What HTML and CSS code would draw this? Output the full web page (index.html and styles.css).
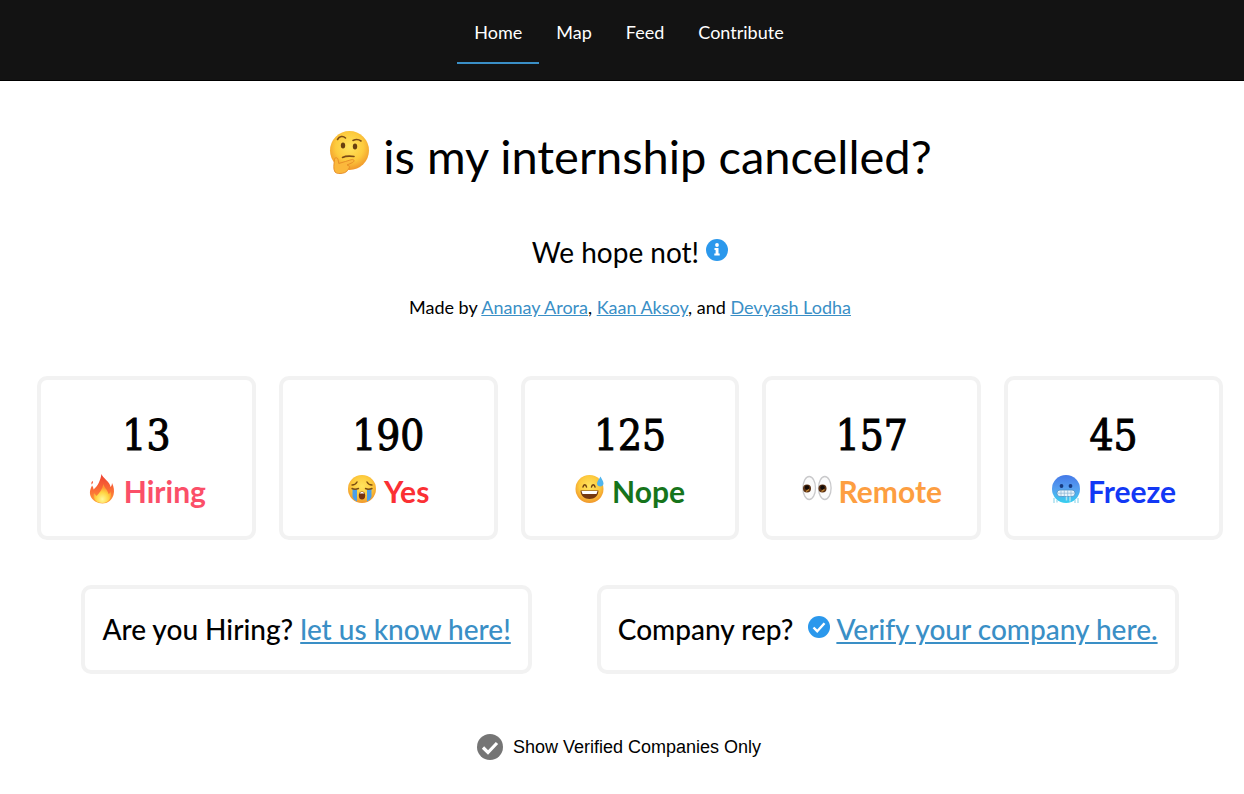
FILE: index.html
```html
<!DOCTYPE html>
<html lang="en">
<head>
<meta charset="utf-8">
<meta name="viewport" content="width=device-width, initial-scale=1">
<title>is my internship cancelled?</title>
<link rel="stylesheet" href="styles.css">
</head>
<body>
<svg class="defs" aria-hidden="true">
  <defs>
    <radialGradient id="face" cx="50%" cy="40%" r="60%"><stop offset="0" stop-color="#ffe45f"/><stop offset=".6" stop-color="#fdcb3d"/><stop offset="1" stop-color="#f0962b"/></radialGradient>
    <linearGradient id="ice" x1="0" y1="0" x2="0" y2="1"><stop offset="0" stop-color="#4479e8"/><stop offset=".5" stop-color="#56a0f0"/><stop offset="1" stop-color="#36d0ef"/></linearGradient>
    <linearGradient id="flame" x1="0" y1="0" x2="0" y2="1"><stop offset="0" stop-color="#ee3f32"/><stop offset=".6" stop-color="#fb7236"/><stop offset="1" stop-color="#fda23a"/></linearGradient>
    <radialGradient id="core" cx="50%" cy="80%" r="60%"><stop offset="0" stop-color="#fff79a"/><stop offset=".6" stop-color="#ffd543"/><stop offset="1" stop-color="#ff9a35"/></radialGradient>
  </defs>
</svg>
<header class="header">
  <nav class="nav">
    <a class="tab active" href="#">Home</a>
    <a class="tab" href="#map">Map</a>
    <a class="tab" href="#feed">Feed</a>
    <a class="tab" href="#contribute">Contribute</a>
  </nav>
</header>
<main class="main">
  <h1 class="title">
    <svg class="emoji-large" viewBox="0 0 42 44" aria-hidden="true">
      <circle cx="21.500" cy="20.500" r="19.500" fill="url(#face)"/>
      <path d="M9.500 9.500c2-3.500 5.500-4 8-1.500M25 10.500c3-1.500 6-1 8 .5M14.500 27.500c4-2 8-1.500 11.500-1" fill="none" stroke="#7b4b16" stroke-width="1.600" stroke-linecap="round"/>
      <ellipse cx="15" cy="15.500" rx="2.200" ry="3" fill="#69400f"/><ellipse cx="27" cy="16.500" rx="2.200" ry="3" fill="#69400f"/>
      <path d="M7 42c-2-3-1-8-.5-12.500 0-2 3-2.500 3.500 0l.8 4c4-1 9-3 13-4 2.500-.5 3 2 .8 3L19 35c3.500.5 2.500 3.500 1 4.500-1 3-5 4-8 4-2 0-3.500 0-5-1.500z" fill="#fbb83c" stroke="#e48a26" stroke-width=".9"/>
    </svg>
    <span>is my internship cancelled?</span>
  </h1>
  <p class="hope">We hope not!
    <svg class="info" viewBox="0 0 22 22" role="img" aria-label="Information"><circle cx="11" cy="11" r="11" fill="#2b98ec"/><circle cx="11" cy="6" r="1.900" fill="#fff"/><path d="M8.500 9h4v5.500h1.200v2H8.300v-2h1.300V11H8.500z" fill="#fff"/></svg>
  </p>
  <p class="credits">Made by <a href="#ananay">Ananay Arora</a>, <a href="#kaan">Kaan Aksoy</a>, and <a href="#devyash">Devyash Lodha</a></p>

  <section class="stats">
    <div class="card stat">
      <span class="count">13</span>
      <span class="status hiring">
        <svg class="emoji" viewBox="0 0 30 30" aria-hidden="true"><path d="M14.500 0c1 4 9 8 9 13 1-1 1.500-2.500 1.500-4 2 4 2.500 8 1.500 12-1.500 5-6 8.500-11 8.500S5 26.500 3.500 22C2 17.500 4 14 5 11.500c1 1.500 1.500 2.500 1.500 4C11 12 13.500 6 14.500 0zM5.500 7c1 1 .5 2-.8 3.500C4 9 4.500 8 5.500 7z" fill="url(#flame)"/><path d="M16.500 10c0 3 4.500 6 5 10 2-1 2-2 2-3 2 6-1.500 12-8 12-7 0-10-5-8.500-10l2.500 3c3-3 6-7 7-12z" fill="url(#core)"/></svg>
        Hiring</span>
    </div>
    <div class="card stat">
      <span class="count">190</span>
      <span class="status yes">
        <svg class="emoji" viewBox="0 0 30 30" aria-hidden="true"><circle cx="15" cy="15" r="14" fill="url(#face)"/><path d="M5.500 15H10v12.500c-2.500-1-4-3-4.500-5zM20 15h4.500v7.500c-.5 2-2 4-4.500 5z" fill="#4b9fe9"/><path d="M5 11c2 0 4-1 5-3M25 11c-2 0-4-1-5-3M5 14.500c2 1 4 1 6.500 0M18.500 14.500c2 1 4 1 6.500 0" fill="none" stroke="#7d4d12" stroke-width="1.400" stroke-linecap="round"/><ellipse cx="15" cy="21.500" rx="3.200" ry="4" fill="#76320f"/><path d="M12.500 19.500c1-2 4-2 5 0z" fill="#fff"/></svg>
        Yes</span>
    </div>
    <div class="card stat">
      <span class="count">125</span>
      <span class="status nope">
        <svg class="emoji" viewBox="0 0 30 30" aria-hidden="true"><circle cx="14.500" cy="15" r="14" fill="url(#face)"/><path d="M8 13c.5-3 3-3 3.500 0M16.500 13c.5-3 3-3 3.500 0" fill="none" stroke="#704110" stroke-width="1.500" stroke-linecap="round"/><path d="M5.500 16.500h18c0 5-4 8.500-9 8.500s-9-3.500-9-8.500z" fill="#743710"/><path d="M6.500 17h16l-1 3h-14z" fill="#fff"/><path d="M25.500 2.500c1 2.500 3 4.500 3 7 0 4-6.500 4-6.500 0 0-2.500 2.500-4.500 3.500-7z" fill="#50b5ee"/></svg>
        Nope</span>
    </div>
    <div class="card stat">
      <span class="count">157</span>
      <span class="status remote">
        <svg class="emoji" viewBox="0 0 30 30" aria-hidden="true"><g fill="#fbfbfb" stroke="#c9c9cb" stroke-width="1.300"><ellipse cx="7.200" cy="14" rx="6.300" ry="11.500"/><ellipse cx="22.800" cy="14" rx="6.300" ry="11.500"/></g><circle cx="5" cy="14.500" r="4" fill="#5b3113"/><circle cx="20.500" cy="14.500" r="4" fill="#5b3113"/><circle cx="5" cy="13.500" r="2.200" fill="#120b07"/><circle cx="20.500" cy="13.500" r="2.200" fill="#120b07"/><path d="M4 17.500l3-2M19.500 17.500l3-2" stroke="#c68a35" stroke-width="1.200"/></svg>
        Remote</span>
    </div>
    <div class="card stat">
      <span class="count">45</span>
      <span class="status freeze">
        <svg class="emoji" viewBox="0 0 30 30" aria-hidden="true"><circle cx="15" cy="15" r="14" fill="url(#ice)"/><circle cx="10.500" cy="12" r="1.900" fill="#173a80"/><circle cx="19.500" cy="12" r="1.900" fill="#173a80"/><rect x="6" y="16" width="18" height="6.500" rx="3" fill="#e9f4fc" stroke="#4c8fc4" stroke-width=".8"/><path d="M6.500 19.200h17M10 16v6.500M13.300 16v6.500M16.700 16v6.500M20 16v6.500" stroke="#8ab6d6" stroke-width=".7"/><path d="M3 24v5M6 26v2.500M15.500 22.500v4M19 22.500v5M24 26v3M27 24v5" stroke="#a9dff0" stroke-width="1.500"/></svg>
        Freeze</span>
    </div>
  </section>

  <section class="actions">
    <div class="card action">Are you Hiring? <a href="#hiring">let us know here!</a></div>
    <div class="card action">Company rep?
      <svg class="verified" viewBox="0 0 22 22" aria-hidden="true"><circle cx="11" cy="11" r="11" fill="#2b98ec"/><path d="M5.500 11.500l3.700 3.700 7.300-8" fill="none" stroke="#fff" stroke-width="2.400"/></svg>
      <a href="#verify">Verify your company here.</a></div>
  </section>

  <label class="filter" for="verified-only">
    <span class="tick">
      <input id="verified-only" type="checkbox">
      <svg viewBox="0 0 26 26" aria-hidden="true"><path d="M6 13.500l5 5 9-9.500" fill="none" stroke="#fff" stroke-width="3.200"/></svg>
    </span>
    Show Verified Companies Only
  </label>
</main>
</body>
</html>
```
FILE: styles.css
```css
* { box-sizing: border-box; }

body {
  margin: 0;
  background: #fff;
  color: #000;
  font-family: "Avenir Next", Avenir, Lato, sans-serif;
  font-size: 18px;
  line-height: 24px;
}

a { color: #3a8fc6; }
p { margin: 0; }

.defs { position: absolute; width: 0; height: 0; }

.header {
  display: flex;
  justify-content: center;
  padding: 0 0 16px 14px;
  background: #131313;
  border-bottom: 1px solid #000;
}

.nav { display: flex; }

.tab {
  padding: 20px 17px 18px;
  border-bottom: 2px solid transparent;
  color: #fff;
  text-decoration: none;
}

.tab.active { border-bottom-color: #3a8fc6; }

.main {
  display: flex;
  flex-direction: column;
  align-items: center;
  padding: 43px 21px 32px 37px;
}

.title {
  display: flex;
  align-items: center;
  gap: 13px;
  margin: 0;
  font-size: 47px;
  font-weight: 400;
  line-height: 64px;
}

.emoji-large { width: 42px; height: 44px; margin-bottom: 8px; }

.hope {
  display: flex;
  align-items: center;
  gap: 7px;
  margin-top: 48px;
  font-size: 28px;
  line-height: 32px;
}

.info, .verified { width: 22px; height: 22px; }
.info { margin-bottom: 4px; }

.credits { margin-top: 27px; }

.stats {
  display: grid;
  grid-template-columns: repeat(5, 1fr);
  gap: 23px;
  width: 100%;
  margin-top: 57px;
}

.card {
  border: 4px solid #f2f2f2;
  border-radius: 10px;
}

.stat {
  display: flex;
  flex-direction: column;
  align-items: center;
  padding: 26px 8px 20px;
}

.count {
  font-family: "Roboto Slab", "DejaVu Serif Condensed", "DejaVu Serif", serif;
  font-size: 42px;
  line-height: 60px;
  -webkit-text-stroke: 1px #000;
}

.status {
  display: flex;
  align-items: center;
  gap: 7px;
  font-size: 30px;
  font-weight: 700;
  line-height: 50px;
}

.emoji { width: 30px; height: 30px; margin-bottom: 4px; }

.hiring { color: #fb4f68; }
.yes { color: #fb3034; }
.nope { color: #16741b; }
.remote { color: #fd9e41; }
.freeze { color: #1238f5; }

.actions {
  display: flex;
  justify-content: center;
  gap: 65px;
  margin-top: 45px;
}

.action {
  padding: 20px 17px;
  font-size: 28px;
  font-weight: 500;
  line-height: 41px;
}

.verified { margin: 0 0 2px 8px; }

.filter {
  display: flex;
  align-items: center;
  gap: 10px;
  margin: 60px 22px 0 0;
  font-family: Helvetica, "Liberation Sans", sans-serif;
}

.tick { display: grid; width: 26px; height: 26px; }
.tick > * { grid-area: 1 / 1; width: 26px; height: 26px; }
.tick svg { pointer-events: none; z-index: 1; }

.tick input {
  appearance: none;
  margin: 0;
  border-radius: 50%;
  background: #757575;
}

.tick input:checked { background: #2b98ec; }
```
